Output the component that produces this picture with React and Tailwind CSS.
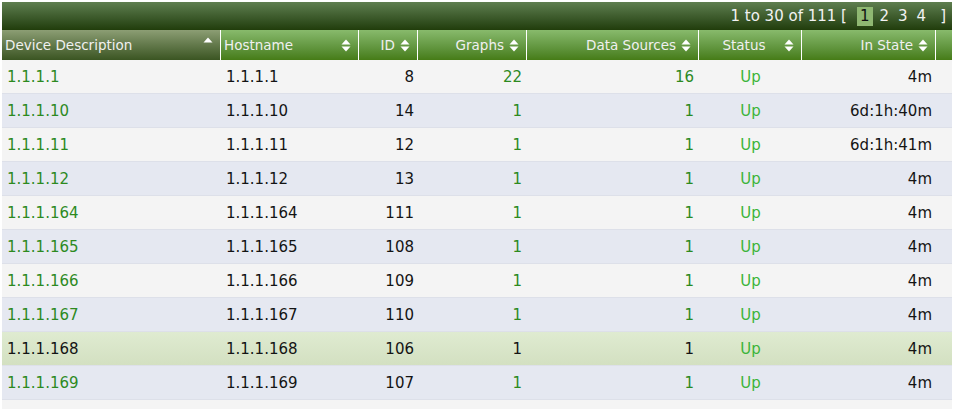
import React from "react";

const rows = [
  ["1.1.1.1", "1.1.1.1", 8, 22, 16, "4m"],
  ["1.1.1.10", "1.1.1.10", 14, 1, 1, "6d:1h:40m"],
  ["1.1.1.11", "1.1.1.11", 12, 1, 1, "6d:1h:41m"],
  ["1.1.1.12", "1.1.1.12", 13, 1, 1, "4m"],
  ["1.1.1.164", "1.1.1.164", 111, 1, 1, "4m"],
  ["1.1.1.165", "1.1.1.165", 108, 1, 1, "4m"],
  ["1.1.1.166", "1.1.1.166", 109, 1, 1, "4m"],
  ["1.1.1.167", "1.1.1.167", 110, 1, 1, "4m"],
  ["1.1.1.168", "1.1.1.168", 106, 1, 1, "4m"],
  ["1.1.1.169", "1.1.1.169", 107, 1, 1, "4m"],
];

const cols = "grid grid-cols-[219px_138px_59px_109px_172px_103px_134px_1fr]";

const SortBoth = () => (
  <svg width="10" height="13" viewBox="0 0 10 13" className="shrink-0">
    <path d="M5 0.5 L9.5 5.5 L0.5 5.5 Z" fill="#fff" />
    <path d="M0.5 7.5 L9.5 7.5 L5 12.5 Z" fill="#fff" />
  </svg>
);

const SortUp = () => (
  <svg width="10" height="13" viewBox="0 0 10 13" className="shrink-0 -translate-y-[2px]">
    <path d="M5 0.5 L9.5 5.5 L0.5 5.5 Z" fill="#fff" />
  </svg>
);

function Head({ label, align = "right", sorted, last }) {
  return (
    <div
      className={`h-[30px] flex items-center ${last ? "" : "border-r border-white"} ${
        sorted
          ? "bg-gradient-to-b from-[#8c9e74] to-[#3b5522]"
          : "bg-gradient-to-b from-[#88ba6c] to-[#467c16]"
      }`}
    >
      {label && (
        <div className="flex items-center w-full pl-[3px] pr-[7px]">
          {align === "left" && <span className="flex-1">{label}</span>}
          {align === "right" && <span className="flex-1 text-right pr-[5px]">{label}</span>}
          {align === "center" && <span className="flex-1 text-center pl-[2px]">{label}</span>}
          {sorted ? <SortUp /> : <SortBoth />}
        </div>
      )}
    </div>
  );
}

export default function App() {
  return (
    <div
      className="h-[409px] overflow-hidden bg-white p-[2px]"
      style={{ fontFamily: "'DejaVu Sans', Verdana, sans-serif" }}
    >
      {/* pager bar */}
      <div className="h-[28px] flex items-center justify-end pr-[6px] bg-gradient-to-b from-[#5f7f50] to-[#213d0b] text-[15px] text-[#f2f2f2]">
        <span>1 to 30 of 111 [</span>
        <span className="ml-[10px] px-[3px] h-[19px] leading-[19px] bg-[#8fb872] text-[#111]">1</span>
        <span className="ml-[7px]">2</span>
        <span className="ml-[9px]">3</span>
        <span className="ml-[9px]">4</span>
        <span className="ml-[14px]">]</span>
      </div>

      <div className={`${cols} text-[13.5px] text-[#f0f0f0]`}>
        <Head label="Device Description" align="left" sorted />
        <Head label="Hostname" align="left" />
        <Head label="ID" />
        <Head label="Graphs" />
        <Head label="Data Sources" />
        <Head label="Status" align="center" />
        <Head label="In State" />
        <Head last />
      </div>

      {rows.map((r, i) => {
        const hl = r[0] === "1.1.1.168";
        const bg = hl
          ? "bg-gradient-to-b from-[#dfebd1] to-[#d3e0c1]"
          : i % 2 === 0
          ? "bg-[#f4f4f4]"
          : "bg-[#e5e8f1]";
        const link = hl ? "text-[#141414]" : "text-[#2d8a1f]";
        return (
          <div
            key={r[0]}
            className={`${cols} h-[34px] items-center pt-[2px] border-b border-[#dde0e9] text-[15px] text-[#141414] ${bg}`}
          >
            <div className={`pl-[5px] ${link}`}>{r[0]}</div>
            <div className="pl-[5px]">{r[1]}</div>
            <div className="text-right pr-[4px]">{r[2]}</div>
            <div className={`text-right pr-[5px] ${link}`}>{r[3]}</div>
            <div className={`text-right pr-[5px] ${link}`}>{r[4]}</div>
            <div className="text-center text-[#3cb43a]">Up</div>
            <div className="text-right pr-[4px]">{r[5]}</div>
            <div />
          </div>
        );
      })}
      <div className="h-[34px] bg-[#f4f4f4]" />
    </div>
  );
}
